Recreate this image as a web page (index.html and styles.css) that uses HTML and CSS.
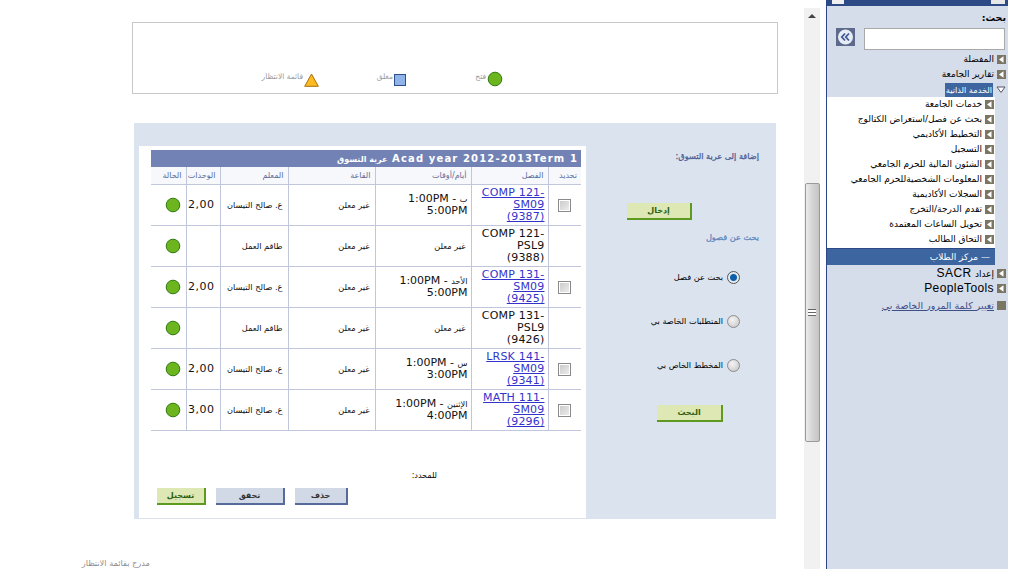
FILE: index.html
```html
<!DOCTYPE html>
<html lang="ar" dir="rtl">
<head>
<meta charset="utf-8">
<title>عربة التسوق</title>
<link rel="stylesheet" href="styles.css">
</head>
<body>
<svg class="defs" width="0" height="0" aria-hidden="true">
  <symbol id="open" viewBox="0 0 16 16"><circle cx="8" cy="8" r="6.8" fill="#6cb51f" stroke="#2f7a10" stroke-width="1"/></symbol>
  <symbol id="arr" viewBox="0 0 9 9"><rect width="9" height="9" fill="#7b7563"/><path d="M6.5 1.2v6.6L2 4.5z" fill="#fff"/></symbol>
</svg>
<aside class="side">
  <div class="side-top"><span class="top-tab"></span><span class="top-box"></span></div>
  <div class="search-label">بحث:</div>
  <div class="search-row">
    <input class="search-input" type="text" aria-label="بحث">
    <button class="collapse" aria-label="طي"><svg width="19" height="18" viewBox="0 0 19 18"><rect width="19" height="18" fill="#5d6a8c"/><circle cx="9.500" cy="9" r="7.500" fill="#e8edf5"/><path d="M9 5.500 5.800 9 9 12.500M13 5.500 9.800 9 13 12.500" fill="none" stroke="#3d5a94" stroke-width="1.800"/></svg></button>
  </div>
  <ul class="nav top-nav">
    <li><svg class="arr"><use href="#arr"/></svg>المفضلة</li>
    <li><svg class="arr"><use href="#arr"/></svg>تقارير الجامعة</li>
    <li><svg class="arr tri" viewBox="0 0 9 9"><path d="M.5 2h8L4.500 7.500z" fill="#fff" stroke="#556"/></svg><span class="sel">الخدمة الذاتية</span></li>
  </ul>
  <div class="sub-wrap">
    <ul class="nav sub-nav">
      <li><svg class="arr"><use href="#arr"/></svg>خدمات الجامعة</li>
      <li><svg class="arr"><use href="#arr"/></svg>بحث عن فصل/استعراض الكتالوج</li>
      <li><svg class="arr"><use href="#arr"/></svg>التخطيط الأكاديمي</li>
      <li><svg class="arr"><use href="#arr"/></svg>التسجيل</li>
      <li><svg class="arr"><use href="#arr"/></svg>الشئون المالية للحرم الجامعي</li>
      <li><svg class="arr"><use href="#arr"/></svg>المعلومات الشخصيةللحرم الجامعي</li>
      <li><svg class="arr"><use href="#arr"/></svg>السجلات الأكاديمية</li>
      <li><svg class="arr"><use href="#arr"/></svg>تقدم الدرجة/التخرج</li>
      <li><svg class="arr"><use href="#arr"/></svg>تحويل الساعات المعتمدة</li>
      <li><svg class="arr"><use href="#arr"/></svg>التحاق الطالب</li>
    </ul>
    <div class="center-bar">— مركز الطلاب</div>
  </div>
  <ul class="nav top-nav lower">
    <li class="big"><svg class="arr"><use href="#arr"/></svg><span class="mix"><span class="mix-ar">إعداد</span> SACR</span></li>
    <li class="big"><svg class="arr"><use href="#arr"/></svg>PeopleTools</li>
    <li class="pw"><span class="sq"></span><a href="#">تغيير كلمة المرور الخاصة بي</a></li>
  </ul>
</aside>
<div class="scroll">
  <div class="scroll-up"></div>
  <div class="thumb"><span class="grip"></span></div>
</div>
<main class="main">
  <section class="legend">
    <div class="lg lg1"><svg class="lg-ic"><use href="#open"/></svg><span>فتح</span></div>
    <div class="lg lg2"><span class="closed"></span><span>مغلق</span></div>
    <div class="lg"><svg class="lg-tri" viewBox="0 0 15 14"><path d="M7.500 1 14.300 13.300H.7z" fill="#fdbb22" stroke="#a8700c"/></svg><span>قائمة الانتظار</span></div>
  </section>
  <section class="panel">
    <div class="actions">
      <h3 class="add-title">إضافة إلى عربة التسوق:</h3>
      <div class="enter-row"><button class="btn green enter">إدخال</button></div>
      <h3 class="find-title">بحث عن فصول</h3>
      <label class="radio"><input type="radio" name="f" checked><span>بحث عن فصل</span></label>
      <label class="radio"><input type="radio" name="f"><span>المتطلبات الخاصة بي</span></label>
      <label class="radio"><input type="radio" name="f"><span>المخطط الخاص بي</span></label>
      <div class="find-row"><button class="btn green find">البحث</button></div>
    </div>
    <div class="card">
      <div class="title">Acad year 2012-2013Term 1 <span class="title-ar">عربة التسوق</span></div>
      <table class="cart">
        <colgroup><col class="c1"><col class="c2"><col class="c3"><col class="c4"><col class="c5"><col class="c6"><col class="c7"></colgroup>
        <thead><tr><th>تحديد</th><th>الفصل</th><th>أيام/أوقات</th><th>القاعة</th><th>المعلم</th><th>الوحدات</th><th>الحالة</th></tr></thead>
        <tbody>
          <tr><td class="ck"><input type="checkbox"></td><td class="cls"><a href="#">COMP 121-SM09 (9387)</a></td><td class="tm"><span class="ar">ب</span> - 1:00PM<br>5:00PM</td><td class="ar">غير معلن</td><td class="ar">ع. صالح التيسان</td><td class="u">2,00</td><td class="st"><svg class="dot"><use href="#open"/></svg></td></tr>
          <tr><td></td><td class="cls">COMP 121-PSL9 (9388)</td><td class="tm ar">غير معلن</td><td class="ar">غير معلن</td><td class="ar">طاقم العمل</td><td class="u"></td><td class="st"><svg class="dot"><use href="#open"/></svg></td></tr>
          <tr><td class="ck"><input type="checkbox"></td><td class="cls"><a href="#">COMP 131-SM09 (9425)</a></td><td class="tm"><span class="ar">الأحد</span> - 1:00PM<br>5:00PM</td><td class="ar">غير معلن</td><td class="ar">ع. صالح التيسان</td><td class="u">2,00</td><td class="st"><svg class="dot"><use href="#open"/></svg></td></tr>
          <tr><td></td><td class="cls">COMP 131-PSL9 (9426)</td><td class="tm ar">غير معلن</td><td class="ar">غير معلن</td><td class="ar">طاقم العمل</td><td class="u"></td><td class="st"><svg class="dot"><use href="#open"/></svg></td></tr>
          <tr><td class="ck"><input type="checkbox"></td><td class="cls"><a href="#">LRSK 141-SM09 (9341)</a></td><td class="tm"><span class="ar">س</span> - 1:00PM<br>3:00PM</td><td class="ar">غير معلن</td><td class="ar">ع. صالح التيسان</td><td class="u">2,00</td><td class="st"><svg class="dot"><use href="#open"/></svg></td></tr>
          <tr><td class="ck"><input type="checkbox"></td><td class="cls"><a href="#">MATH 111-SM09 (9296)</a></td><td class="tm"><span class="ar">الإثنين</span> - 1:00PM<br>4:00PM</td><td class="ar">غير معلن</td><td class="ar">ع. صالح التيسان</td><td class="u">3,00</td><td class="st"><svg class="dot"><use href="#open"/></svg></td></tr>
        </tbody>
      </table>
      <div class="selected">للمحدد:</div>
      <div class="card-btns">
        <button class="btn blue del">حذف</button>
        <button class="btn blue chk">تحقق</button>
        <button class="btn green reg">تسجيل</button>
      </div>
    </div>
  </section>
  <p class="wait-note">مدرج بقائمة الانتظار</p>
</main>
</body>
</html>
```
FILE: styles.css
```css
* { box-sizing: border-box; }
html, body { margin: 0; height: 569px; overflow: hidden; }
body {
  display: flex;
  align-items: flex-start;
  background: #fff;
  font-family: "DejaVu Sans", "Liberation Sans", sans-serif;
  font-size: 10px;
  color: #000;
}
.defs { position: absolute; }

/* sidebar */
.side {
  width: 182px;
  height: 569px;
  margin-right: 2px;
  flex: none;
  background: #d5dcea;
  border-left: 1px solid #2d4486;
}
.side-top { height: 6px; background: #2d4a86; display: flex; justify-content: space-between; padding: 0 3px 0 5px; }
.top-box { width: 12px; height: 4px; background: #f0f0f0; }
.top-tab { width: 14px; height: 4px; background: #e8e8e8; }
.search-label { height: 22px; padding: 6px 2px 0 0; font-size: 9.500px; line-height: 12px; font-weight: bold; }
.search-row { display: flex; align-items: flex-start; height: 24px; padding-right: 3px; gap: 9px; }
.search-input { width: 141px; height: 22px; border: 1px solid #a9a9a9; background: #fff; padding: 0; }
.collapse { width: 19px; height: 18px; padding: 0; border: 0; background: none; display: block; }
.nav { list-style: none; margin: 0; padding: 0; font-size: 9px; }
.nav li { height: 15px; line-height: 15px; display: flex; align-items: center; gap: 3px; white-space: nowrap; }
.arr { width: 9px; height: 9px; flex: none; }
.top-nav li { padding-right: 2px; }
.tri { width: 10px; }
.sel { background: #3d659f; color: #fff; padding: 0 1px; height: 14px; line-height: 14px; font-size: 8.200px; }
.sub-wrap { margin-right: 13px; background: #fff; }
.sub-nav { height: 151px; }
.sub-nav li { padding-right: 1px; }
.center-bar { height: 17px; line-height: 16px; background: #3d659f; color: #fff; padding-right: 5px; border-top: 1px solid #2d4a86; font-size: 9px; }
.lower { padding-top: 1px; }
.lower .big { font-family: "Liberation Sans", "DejaVu Sans", sans-serif; font-size: 12px; letter-spacing: .4px; }
.mix-ar { font-family: "DejaVu Sans", sans-serif; font-size: 9px; letter-spacing: 0; }
.lower .pw { padding-top: 2px; height: 16px; font-size: 9.500px; }
.sq { width: 9px; height: 9px; background: #7b7563; flex: none; }
.pw a { color: #3f4f88; }

/* scrollbar */
.scroll {
  width: 16px;
  height: 561px;
  margin-top: 8px;
  margin-right: 6px;
  flex: none;
  background: #f1f1f1;
}
.scroll-up {
  width: 0; height: 0;
  margin: 6px auto 0;
  border: 4px solid transparent;
  border-top: 0;
  border-bottom: 4px solid #444;
}
.thumb {
  width: 15px;
  height: 259px;
  margin: 165px auto 0;
  background: linear-gradient(to right, #ececec, #d6d6d6 45%, #c4c4c4);
  border: 1px solid #9a9a9a;
  border-radius: 2px;
  display: flex;
  align-items: center;
  justify-content: center;
}
.grip { width: 8px; height: 7px; border-top: 1px solid #666; border-bottom: 1px solid #666; background: linear-gradient(#fff 2px, #666 2px, #666 3px, #fff 3px); }

/* main */
.main { width: 804px; flex: none; }
.legend {
  width: 646px;
  height: 72px;
  margin: 22px 26px 0 0;
  border: 1px solid #c9c9c9;
  display: flex;
  align-items: flex-end;
  padding: 0 274px 6px 0;
  color: #9a9a9a;
  font-size: 7.500px;
}
.lg { display: flex; align-items: flex-end; flex: none; gap: 1px; }
.lg span:last-child { position: relative; top: -6px; }
.lg1 { width: 97px; }
.lg2 { width: 87px; }
.lg-ic { width: 16px; height: 16px; }
.closed { width: 12px; height: 12px; background: #8fb5e8; border: 1px solid #2d4f8f; margin-bottom: 1px; }
.lg-tri { width: 15px; height: 14px; }

.panel {
  width: 642px;
  height: 396px;
  margin: 29px 28px 0 0;
  background: #dbe3ee;
  display: flex;
  align-items: flex-start;
}
.actions { width: 190px; flex: none; padding: 27px 17px 0 0; }
.add-title, .find-title { margin: 0; font-size: 8.200px; line-height: 12px; font-weight: normal; -webkit-text-stroke: .25px; }
.add-title { color: #4b5b92; }
.find-title { color: #5f86bd; margin-top: 11px; }
.enter-row { padding: 41px 67px 0 0; }
.btn {
  display: block;
  height: 17px;
  padding: 0;
  border: 0;
  font-family: inherit;
  font-size: 8px;
  font-weight: bold;
  line-height: 15px;
  color: #333;
}
.green { background: #dde8b4; border-right: 2px solid #5f9a20; border-bottom: 2px solid #5f9a20; color: #2f5f10; }
.blue { background: #d1d9e7; border-right: 2px solid #566a9c; border-bottom: 2px solid #566a9c; }
.enter { width: 65px; }
.radio { display: flex; align-items: center; gap: 4px; height: 14px; padding-right: 19px; line-height: 14px; font-size: 8.200px; }
.radio input {
  appearance: none;
  width: 13px; height: 13px;
  margin: 0;
  border-radius: 50%;
  border: 1px solid #8c8c8c;
  background: radial-gradient(circle at 40% 35%, #f4f4f4, #c4c4c4);
  flex: none;
}
.radio input:checked { background: radial-gradient(circle, #0d5ea8 0 3px, #e4e8f0 4px); border-color: #555; }
.find-title + .radio { margin-top: 27px; }
.radio + .radio { margin-top: 30px; }
.find-row { padding: 33px 36px 0 0; }
.find { width: 66px; }

.card { width: 447px; height: 372px; margin-top: 23px; background: #fff; padding: 4px 5px 0 12px; flex: none; }
.title {
  height: 17px;
  line-height: 17px;
  background: #7282b5;
  color: #fff;
  font-size: 10px;
  font-weight: bold;
  padding-right: 3px;
  letter-spacing: 1.14px;
  white-space: nowrap;
}
.title-ar { font-size: 8px; letter-spacing: 0; }
.cart { width: 430px; border-collapse: collapse; table-layout: fixed; }
.c1 { width: 33px; } .c2 { width: 77px; } .c3 { width: 96px; } .c4 { width: 87px; } .c5 { width: 68px; } .c6 { width: 34px; } .c7 { width: 35px; }
.cart th {
  height: 17px;
  padding: 0 4px 0 0;
  font-size: 8px;
  font-weight: normal;
  color: #5a6f9c;
  background: #f7f8fb;
  text-align: right;
  white-space: nowrap;
  border-bottom: 1px solid #c0c7dc;
  border-left: 1px solid #c0c7dc;
}
.cart th:last-child, .cart td:last-child { border-left: 0; }
.cart td {
  height: 41px;
  padding: 1px 5px 0 2px;
  font-size: 11px;
  line-height: 12px;
  text-align: right;
  border-bottom: 1px solid #c0c7dc;
  border-left: 1px solid #c0c7dc;
  color: #111;
  overflow: hidden;
}
.cart .ar, .cart td.ar { font-size: 8.200px; white-space: nowrap; }
.cart .cls { padding: 1px 3px 0 8px; letter-spacing: .2px; }
.cart .tm { padding-right: 3px; }
.cart .tm.ar { padding-right: 5px; }
.cart a { color: #3333cc; }
.cart .ck { text-align: center; padding: 0; }
.ck input {
  appearance: none;
  display: block;
  width: 13px; height: 13px;
  margin: 1px auto 0;
  border: 1px solid #8a8a8a;
  background: linear-gradient(135deg, #c8c8c8, #efefef);
  box-shadow: inset 0 0 0 1px #fff;
}
.u { letter-spacing: .5px; }
.cart .st { padding: 0; }
.dot { display: block; width: 16px; height: 16px; margin: 0 5px 0 auto; }
.selected { height: 15px; margin: 37px 0 0; padding-right: 144px; font-size: 8px; line-height: 15px; }
.card-btns { display: flex; gap: 10px; padding-right: 233px; margin-top: 5px; }
.del { width: 53px; } .chk { width: 69px; } .reg { width: 49px; }

.wait-note { margin: 38px 0 0; padding-right: 654px; font-size: 8.200px; line-height: 12px; color: #8d8d8d; white-space: nowrap; }
```
